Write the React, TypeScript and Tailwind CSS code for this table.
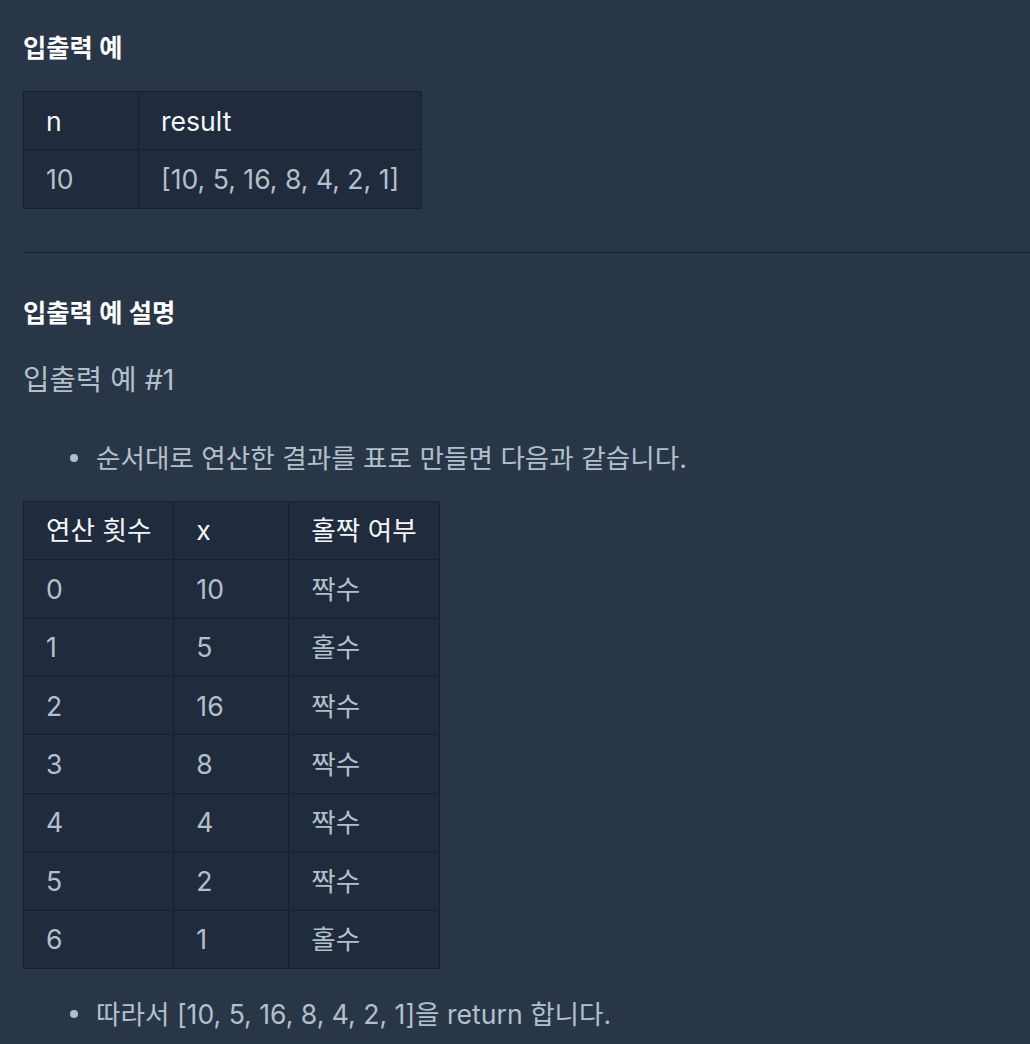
import React from "react";

const font = { fontFamily: 'Inter, "Noto Sans CJK KR", sans-serif' };

function Cell({ children, head, w }: { children: React.ReactNode; head?: boolean; w: string }) {
  return (
    <td
      className={`${w} border border-[#172030] px-[22px] py-[9.5px] leading-[38.4px] whitespace-nowrap text-left ${
        head ? "text-[#f4f6f8]" : "text-[#b2c0cc]"
      }`}
    >
      {children}
    </td>
  );
}

function Bullet({ children }: { children: React.ReactNode }) {
  return (
    <div className="flex items-center h-[40px] pl-[47px]">
      <span className="w-[8px] h-[8px] rounded-full bg-[#b2c0cc] shrink-0" />
      <span className="ml-[18px] text-[26.6px] leading-[40px] text-[#b2c0cc] whitespace-nowrap">{children}</span>
    </div>
  );
}

export default function App() {
  const rows: [string, string, string][] = [
    ["0", "10", "짝수"],
    ["1", "5", "홀수"],
    ["2", "16", "짝수"],
    ["3", "8", "짝수"],
    ["4", "4", "짝수"],
    ["5", "2", "짝수"],
    ["6", "1", "홀수"],
  ];
  return (
    <div className="min-h-[1044px] bg-[#283648] overflow-hidden" style={font}>
      <div className="pl-[23px] pt-[30px]">
        <h5 className="text-[25.3px] leading-[36px] font-semibold text-[#ffffff]">입출력 예</h5>
        <table className="mt-[25px] border-collapse bg-[#202b3d] text-[26.6px]">
          <tbody>
            <tr>
              <Cell head w="w-[115px]">n</Cell>
              <Cell head w="w-[283px]">result</Cell>
            </tr>
            <tr>
              <Cell w="w-[115px]">10</Cell>
              <Cell w="w-[283px]">[10, 5, 16, 8, 4, 2, 1]</Cell>
            </tr>
          </tbody>
        </table>
        <div className="mt-[43px] h-px bg-[#172030]" />
        <h5 className="mt-[42px] text-[25.3px] leading-[36px] font-semibold text-[#ffffff]">입출력 예 설명</h5>
        <h4 className="mt-[29px] text-[28.7px] leading-[40px] text-[#b2c0cc]">입출력 예 #1</h4>
        <div className="mt-[38px]">
          <Bullet>순서대로 연산한 결과를 표로 만들면 다음과 같습니다.</Bullet>
        </div>
        <table className="mt-[23px] border-collapse bg-[#202b3d] text-[26.6px]">
          <tbody>
            <tr>
              <Cell head w="w-[150px]">연산 횟수</Cell>
              <Cell head w="w-[115px]">x</Cell>
              <Cell head w="w-[150px]">홀짝 여부</Cell>
            </tr>
            {rows.map((r) => (
              <tr key={r[0]}>
                <Cell w="w-[150px]">{r[0]}</Cell>
                <Cell w="w-[115px]">{r[1]}</Cell>
                <Cell w="w-[150px]">{r[2]}</Cell>
              </tr>
            ))}
          </tbody>
        </table>
        <div className="mt-[25px]">
          <Bullet>따라서 [10, 5, 16, 8, 4, 2, 1]을 return 합니다.</Bullet>
        </div>
      </div>
    </div>
  );
}
